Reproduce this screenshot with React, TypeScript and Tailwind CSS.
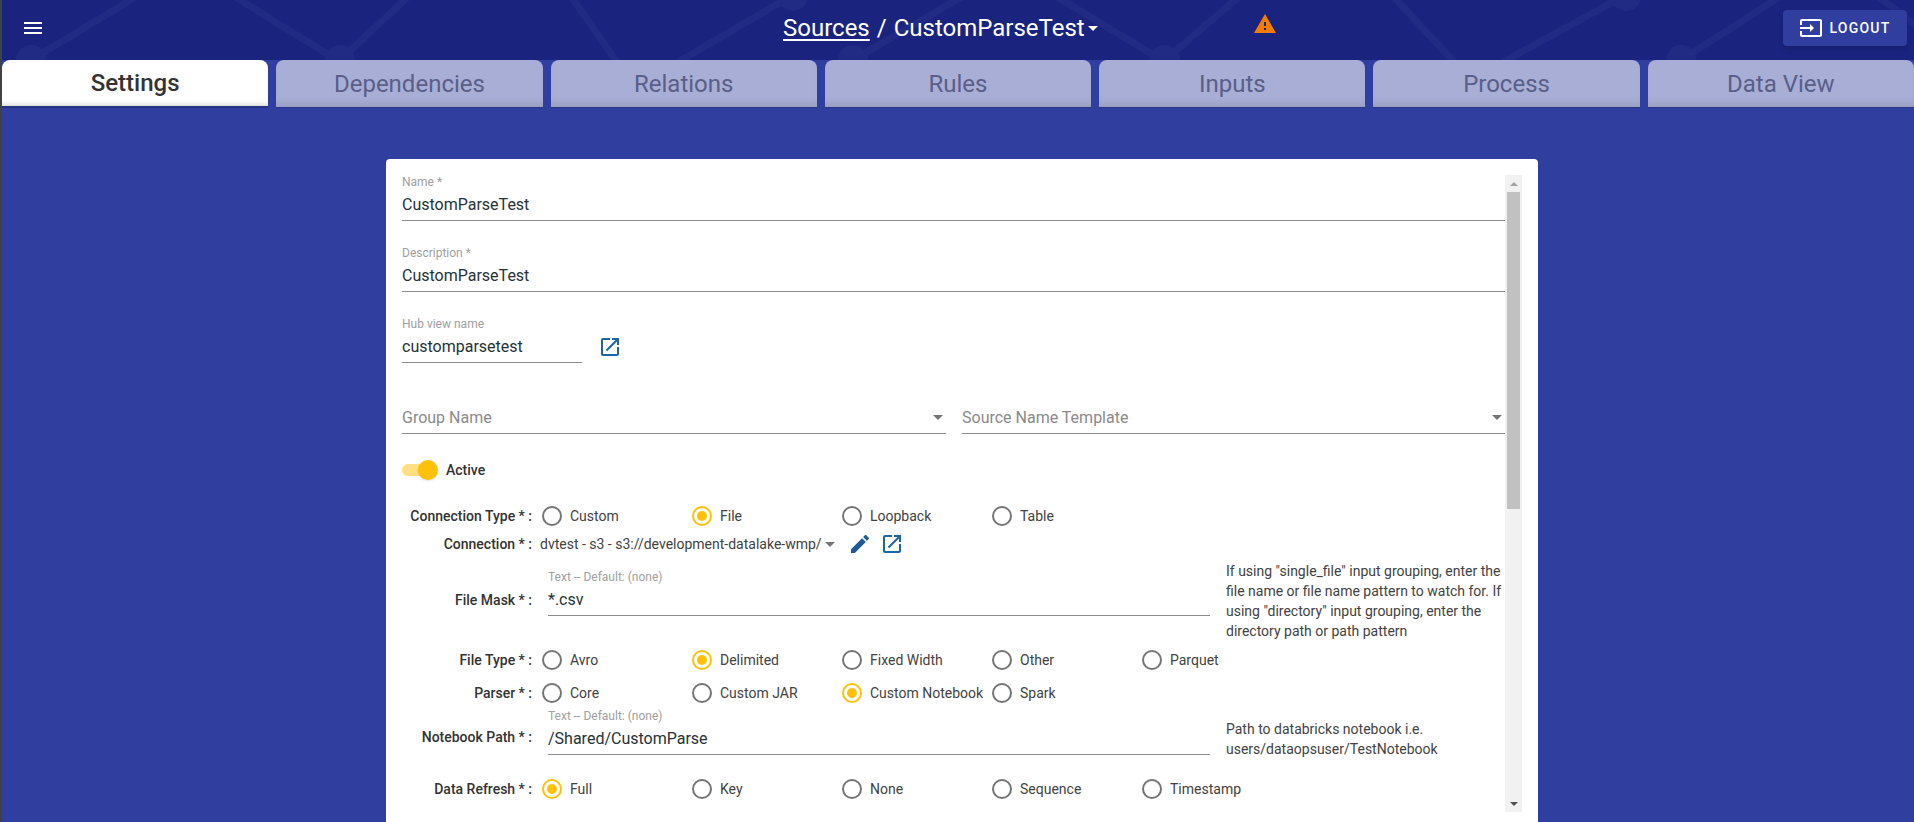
import type { ReactNode } from 'react'

const TABS = ['Settings', 'Dependencies', 'Relations', 'Rules', 'Inputs', 'Process', 'Data View']

function Icon({ d, className }: { d: string; className: string }) {
  return (
    <svg viewBox="0 0 24 24" className={className} fill="currentColor" aria-hidden>
      <path d={d} />
    </svg>
  )
}

const MENU = 'M3 18h18v-2H3v2zm0-5h18v-2H3v2zm0-7v2h18V6H3z'
const OPEN_NEW =
  'M19 19H5V5h7V3H5c-1.11 0-2 .9-2 2v14c0 1.1.89 2 2 2h14c1.1 0 2-.9 2-2v-7h-2v7zM14 3v2h3.59l-9.83 9.83 1.41 1.41L19 6.41V10h2V3h-7z'
const EDIT =
  'M3 17.25V21h3.75L17.81 9.94l-3.75-3.75L3 17.25zM20.71 7.04c.39-.39.39-1.02 0-1.41l-2.34-2.34c-.39-.39-1.02-.39-1.41 0l-1.83 1.83 3.75 3.75 1.83-1.83z'
const WARNING = 'M1 21h22L12 2 1 21zm12-3h-2v-2h2v2zm0-4h-2v-4h2v4z'
const LOGOUT =
  'M21 3.01H3c-1.1 0-2 .9-2 2V9h2V4.99h18v14.03H3V15H1v4.01c0 1.1.9 1.98 2 1.98h18c1.1 0 2-.88 2-1.98v-14c0-1.11-.9-2-2-2zM11 16l4-4-4-4v3H1v2h10v3z'

// faint network drawing behind the app bar
function HeaderPattern() {
  const lines = [
    [29, 60, 137, -5],
    [230, -5, 338, 62],
    [338, 60, 408, -5],
    [568, -5, 615, 62],
    [676, 62, 791, -5],
    [851, 60, 963, -5],
    [1052, -5, 1163, 62],
    [1163, 60, 1239, -5],
    [1390, -5, 1452, 62],
    [1501, 62, 1624, -5],
    [1679, 60, 1781, -5],
    [1874, -5, 1920, 30],
  ]
  const nodes = [
    [29, 60],
    [338, 60],
    [791, -4],
    [851, 60],
    [1163, 60],
    [1624, -4],
    [1679, 60],
  ]
  return (
    <svg className="absolute inset-0 h-full w-full" viewBox="0 0 1912 60" preserveAspectRatio="none" aria-hidden>
      {lines.map((l, i) => (
        <line key={i} x1={l[0]} y1={l[1]} x2={l[2]} y2={l[3]} stroke="#222b84" strokeWidth={7} />
      ))}
      {nodes.map((n, i) => (
        <circle key={i} cx={n[0]} cy={n[1]} r={15} fill="#222b84" />
      ))}
    </svg>
  )
}

function Header() {
  return (
    <header className="relative flex h-[60px] shrink-0 items-center overflow-hidden bg-[#1a237e] text-white">
      <HeaderPattern />
      <div className="relative ml-[19px] flex w-[762px] shrink-0 -translate-y-[2px]">
        <Icon d={MENU} className="h-6 w-6" />
      </div>
      <div className="relative flex -translate-y-[2px] items-center text-[24px] leading-[28px]">
        <span className="underline decoration-2 underline-offset-[3px]">Sources</span>
        <span className="mx-[7px]">/</span>
        <span>CustomParseTest</span>
        <span className="ml-[3px] h-0 w-0 border-x-[5px] border-t-[5px] border-x-transparent border-t-white" />
      </div>
      <Icon d={WARNING} className="relative ml-[155px] h-6 w-6 -translate-y-[6px] text-[#f57c00]" />
      <button
        type="button"
        className="relative ml-auto mr-[7px] flex h-9 w-[124px] -translate-y-[2px] items-center justify-center gap-[6px] rounded bg-[#303f9f] text-[14px] font-medium tracking-[1.25px] shadow-md"
      >
        <Icon d={LOGOUT} className="h-6 w-6" />
        LOGOUT
      </button>
    </header>
  )
}

function Tabs() {
  return (
    <nav className="flex h-12 shrink-0 gap-2">
      {TABS.map((t, i) => (
        <div
          key={t}
          className={
            i === 0
              ? 'flex h-[46px] flex-1 items-center justify-center rounded-t-lg bg-white text-[24px] font-medium text-[#333333] shadow-[inset_0_-6px_6px_-6px_rgba(0,0,0,0.25),0_2px_0_#263282]'
              : 'flex h-12 flex-1 items-center justify-center rounded-t-lg border-b border-[#2a3585] bg-[#a9aed6] text-[24px] text-[#5a5e88] shadow-[inset_0_-8px_8px_-6px_rgba(0,0,0,0.14)]'
          }
        >
          {t}
        </div>
      ))}
    </nav>
  )
}

function Field({
  label,
  value,
  placeholder,
  arrow,
  className,
}: {
  label?: string
  value?: string
  placeholder?: string
  arrow?: boolean
  className: string
}) {
  return (
    <div className={`relative h-[46px] border-b border-[#8c8c8c] ${className}`}>
      <div className="h-[18px] text-[12px] leading-[14px] text-[#a0a0a0]">{label}</div>
      <div className={`text-[16px] leading-6 ${value ? 'text-[#263238]' : 'text-[#8a8a8a]'}`}>{value ?? placeholder}</div>
      {arrow && (
        <span className="absolute right-[3px] top-[27px] h-0 w-0 border-x-[5px] border-t-[5px] border-x-transparent border-t-[#757575]" />
      )}
    </div>
  )
}

function Radio({ label, checked }: { label: string; checked?: boolean }) {
  return (
    <div className="flex w-[150px] items-center">
      <span
        className={`ml-[2px] flex h-5 w-5 shrink-0 items-center justify-center rounded-full border-2 ${
          checked ? 'border-[#ffc107]' : 'border-[#757575]'
        }`}
      >
        {checked && <span className="h-[10px] w-[10px] rounded-full bg-[#ffc107]" />}
      </span>
      <span className="ml-2 whitespace-nowrap text-[14px] text-[#424242]">{label}</span>
    </div>
  )
}

function RowLabel({ children }: { children: ReactNode }) {
  return <div className="mr-2 w-[130px] shrink-0 text-right text-[14px] font-medium text-[#333333]">{children}</div>
}

function RadioRow({
  label,
  options,
  selected,
  className,
}: {
  label: string
  options: string[]
  selected: string
  className?: string
}) {
  return (
    <div className={`flex h-7 items-center ${className ?? ''}`}>
      <RowLabel>{label}</RowLabel>
      {options.map((o) => (
        <Radio key={o} label={o} checked={o === selected} />
      ))}
    </div>
  )
}

function TextRow({
  label,
  value,
  help,
  labelClass,
  className,
}: {
  label: string
  value: string
  help: string[]
  labelClass: string
  className: string
}) {
  return (
    <div className={`flex ${className}`}>
      <RowLabel>
        <div className={labelClass}>{label}</div>
      </RowLabel>
      <div className="ml-2 h-[47px] w-[662px] shrink-0 border-b border-[#8c8c8c] pt-px">
        <div className="h-[18px] text-[12px] leading-[14px] text-[#a0a0a0]">Text -- Default: (none)</div>
        <div className="text-[16px] leading-6 text-[#263238]">{value}</div>
      </div>
      <div className="ml-4 -mt-[8px] text-[14px] leading-5 text-[#424242]">
        {help.map((h) => (
          <div key={h} className="whitespace-nowrap">
            {h}
          </div>
        ))}
      </div>
    </div>
  )
}

function Scrollbar() {
  return (
    <div className="relative flex h-[637px] w-[17px] shrink-0 flex-col bg-[#f1f1f1]">
      <div className="flex h-[17px] items-center justify-center">
        <span className="h-0 w-0 border-x-[4px] border-b-[4px] border-x-transparent border-b-[#a3a3a3]" />
      </div>
      <div className="mx-[2px] h-[317px] bg-[#c1c1c1]" />
      <div className="mt-auto flex h-[17px] items-center justify-center">
        <span className="h-0 w-0 border-x-[4px] border-t-[4px] border-x-transparent border-t-[#505050]" />
      </div>
    </div>
  )
}

function Form() {
  return (
    <div className="w-[1103px] shrink-0">
      <Field label="Name *" value="CustomParseTest" className="w-full" />
      <Field label="Description *" value="CustomParseTest" className="mt-[25px] w-full" />
      <div className="mt-[25px] flex">
        <Field label="Hub view name" value="customparsetest" className="w-[180px]" />
        <Icon d={OPEN_NEW} className="ml-[16px] mt-[18px] h-6 w-6 text-[#1e64a8]" />
      </div>
      <div className="mt-[25px] flex gap-4">
        <Field placeholder="Group Name" arrow className="w-[544px]" />
        <Field placeholder="Source Name Template" arrow className="w-[543px]" />
      </div>
      <div className="mt-6 flex h-6 items-center">
        <div className="relative h-3 w-8 rounded-full bg-[#ffdf80]">
          <span className="absolute -top-1 left-[16px] h-5 w-5 rounded-full bg-[#ffc107] shadow-sm" />
        </div>
        <span className="ml-3 text-[14px] font-medium text-[#333333]">Active</span>
      </div>
      <RadioRow
        label="Connection Type * :"
        options={['Custom', 'File', 'Loopback', 'Table']}
        selected="File"
        className="mt-5"
      />
      <div className="flex h-7 items-center">
        <RowLabel>Connection * :</RowLabel>
        <span className="text-[14px] text-[#424242]">dvtest - s3 - s3://development-datalake-wmp/</span>
        <span className="ml-[3px] h-0 w-0 border-x-[5px] border-t-[5px] border-x-transparent border-t-[#757575]" />
        <Icon d={EDIT} className="ml-[13px] h-6 w-6 text-[#1e5a96]" />
        <Icon d={OPEN_NEW} className="ml-2 h-6 w-6 text-[#1e64a8]" />
      </div>
      <TextRow
        label="File Mask * :"
        value="*.csv"
        help={[
          'If using "single_file" input grouping, enter the',
          'file name or file name pattern to watch for. If',
          'using "directory" input grouping, enter the',
          'directory path or path pattern',
        ]}
        labelClass="pt-[21px]"
        className="mt-[11px] h-[69px]"
      />
      <RadioRow
        label="File Type * :"
        options={['Avro', 'Delimited', 'Fixed Width', 'Other', 'Parquet']}
        selected="Delimited"
        className="mt-[8px]"
      />
      <RadioRow
        label="Parser * :"
        options={['Core', 'Custom JAR', 'Custom Notebook', 'Spark']}
        selected="Custom Notebook"
        className="mt-[5px]"
      />
      <TextRow
        label="Notebook Path * :"
        value="/Shared/CustomParse"
        help={['Path to databricks notebook i.e.', 'users/dataopsuser/TestNotebook']}
        labelClass="pt-[19px]"
        className="mt-[1px] h-[67px] [&>div:last-child]:pt-[19px]"
      />
      <RadioRow
        label="Data Refresh * :"
        options={['Full', 'Key', 'None', 'Sequence', 'Timestamp']}
        selected="Full"
      />
    </div>
  )
}

export default function App() {
  return (
    <div className="flex h-[822px] w-[1914px] overflow-hidden border-l-2 border-[#424242] bg-[#303f9f] font-['Roboto',sans-serif]">
      <div className="flex min-w-0 flex-1 flex-col">
        <Header />
        <Tabs />
        <main className="mt-[51px] min-h-0 flex-1 overflow-hidden">
          <div className="ml-[384px] flex h-[700px] w-[1152px] rounded bg-white pl-4 pt-4">
            <Form />
            <Scrollbar />
          </div>
        </main>
      </div>
    </div>
  )
}
